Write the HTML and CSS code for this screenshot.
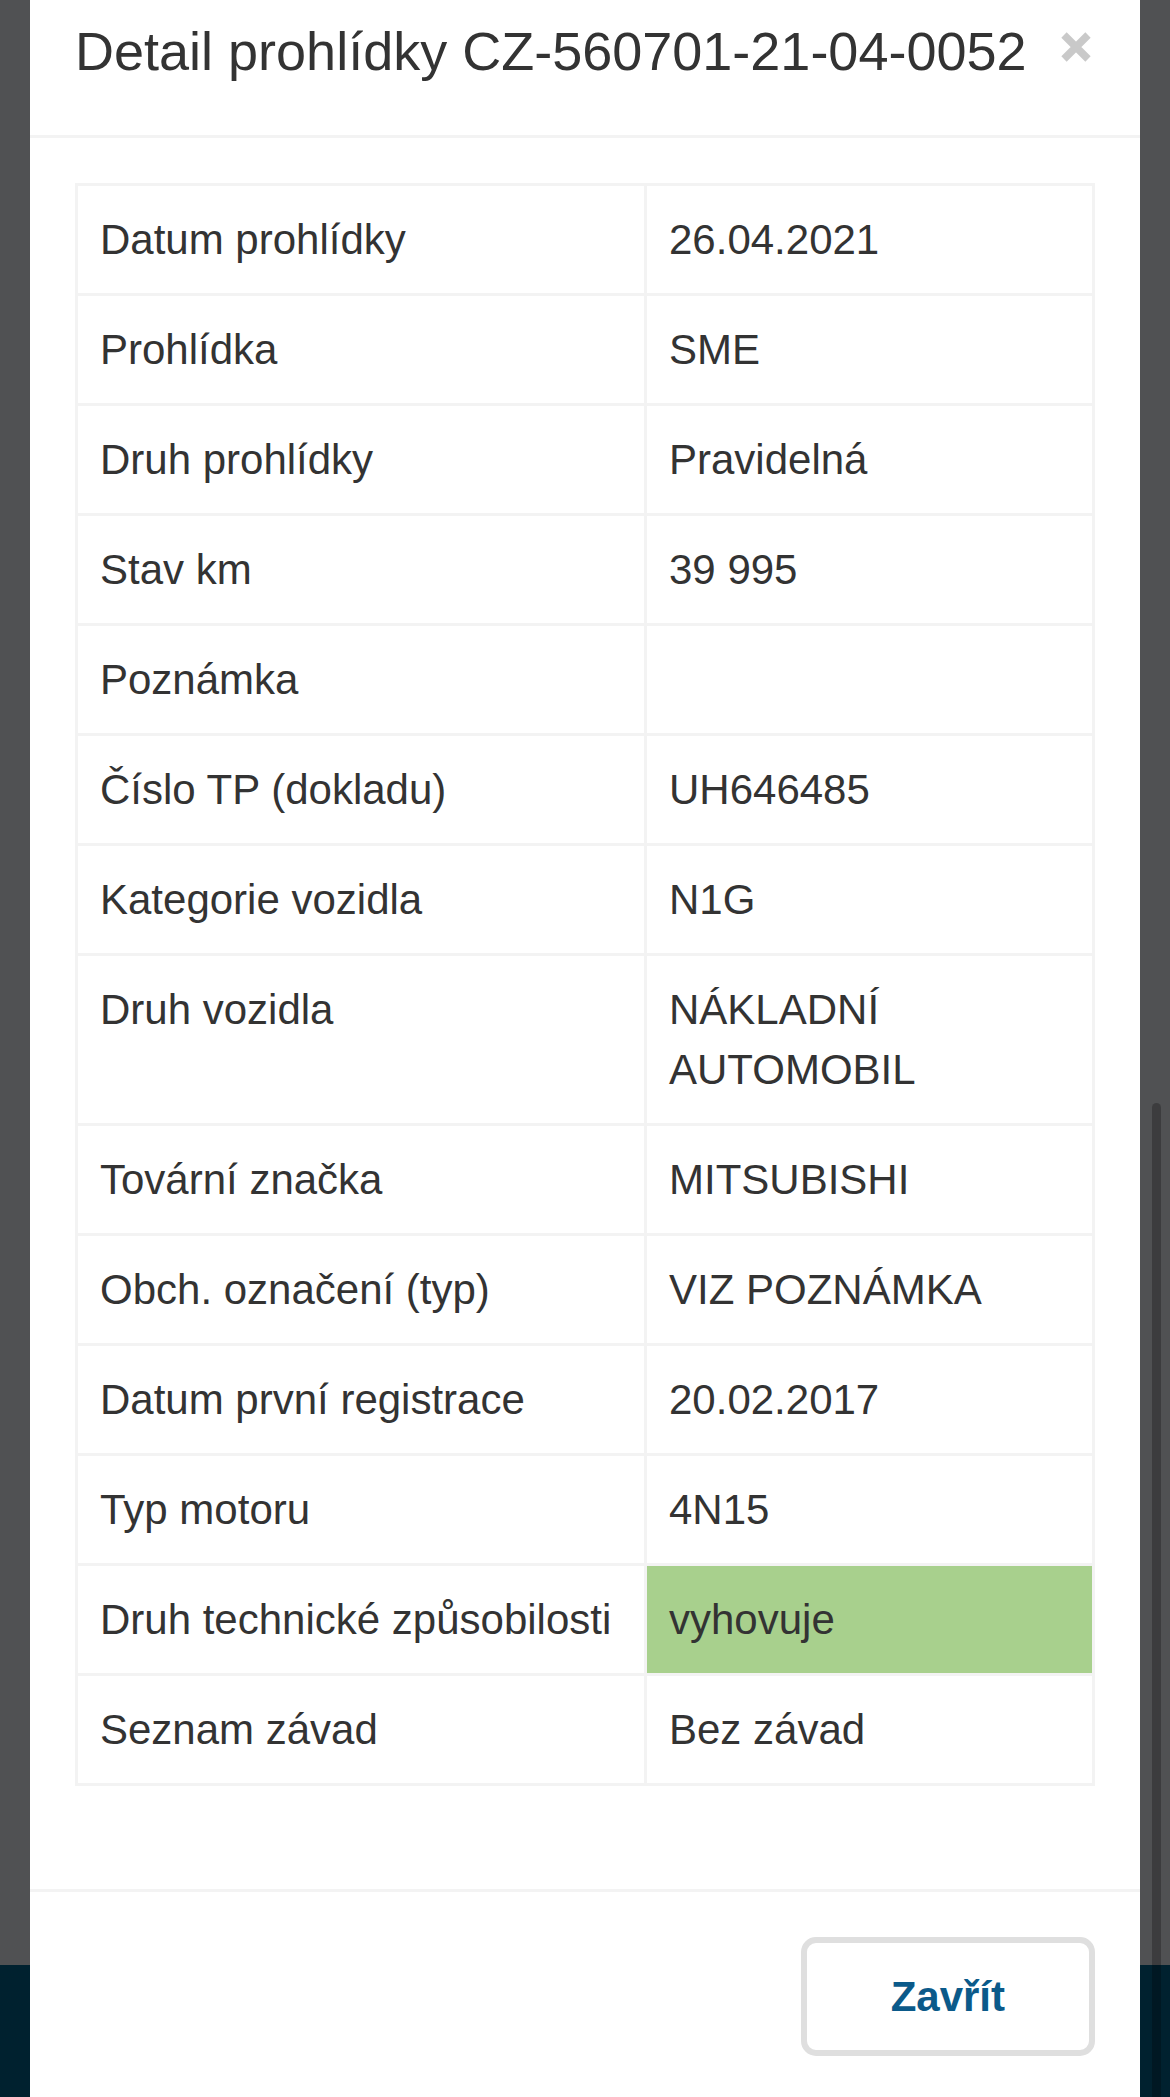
FILE: index.html
```html
<!DOCTYPE html>
<html lang="cs">
<head>
<meta charset="UTF-8">
<meta name="viewport" content="width=device-width, initial-scale=1.0">
<title>Detail prohlídky</title>
<link rel="stylesheet" href="styles.css">
</head>
<body>

<div class="page">
  <div class="page-main"></div>
  <div class="page-footer"></div>
</div>

<div class="scrollbar"></div>

<div class="modal">
  <div class="modal-header">
    <h4 class="modal-title">Detail prohlídky CZ-560701-21-04-0052</h4>
    <button class="close" type="button" aria-label="Zavřít">
      <svg width="30" height="30" viewBox="0 0 30 30">
        <path d="M3 3 L27 27 M27 3 L3 27" stroke="#c9c9c9" stroke-width="7.5" fill="none"/>
      </svg>
    </button>
  </div>

  <div class="modal-body">
    <table class="detail">
      <tr><td class="label">Datum prohlídky</td><td>26.04.2021</td></tr>
      <tr><td class="label">Prohlídka</td><td>SME</td></tr>
      <tr><td class="label">Druh prohlídky</td><td>Pravidelná</td></tr>
      <tr><td class="label">Stav km</td><td>39 995</td></tr>
      <tr><td class="label">Poznámka</td><td></td></tr>
      <tr><td class="label">Číslo TP (dokladu)</td><td>UH646485</td></tr>
      <tr><td class="label">Kategorie vozidla</td><td>N1G</td></tr>
      <tr><td class="label">Druh vozidla</td><td>NÁKLADNÍ AUTOMOBIL</td></tr>
      <tr><td class="label">Tovární značka</td><td>MITSUBISHI</td></tr>
      <tr><td class="label">Obch. označení (typ)</td><td>VIZ POZNÁMKA</td></tr>
      <tr><td class="label">Datum první registrace</td><td>20.02.2017</td></tr>
      <tr><td class="label">Typ motoru</td><td>4N15</td></tr>
      <tr><td class="label">Druh technické způsobilosti</td><td class="success">vyhovuje</td></tr>
      <tr><td class="label">Seznam závad</td><td>Bez závad</td></tr>
    </table>
  </div>

  <div class="modal-footer">
    <button class="btn" type="button">Zavřít</button>
  </div>
</div>

</body>
</html>
```

FILE: styles.css
```css
body {
  margin: 0;
  font-family: "Liberation Sans", Arial, sans-serif;
  color: #333;
  overflow: hidden;
  height: 2097px;
  position: relative;
}

/* dimmed page under the modal */
.page-main {
  height: 1965px;
  background: #505153;
}

.page-footer {
  height: 132px;
  background: #00212f;
}

.scrollbar {
  position: absolute;
  top: 1103px;
  right: 9px;
  width: 9px;
  bottom: -10px;
  border-radius: 5px;
  background: rgba(0, 0, 0, 0.25);
}

.modal {
  position: absolute;
  top: 0;
  left: 30px;
  right: 30px;
  bottom: 0;
  overflow: hidden;
  background: #fff;
}

.modal-header {
  display: flex;
  justify-content: space-between;
  align-items: flex-start;
  padding: 13px 45px 45px 45px;
  border-bottom: 3px solid #f3f3f3;
}

.modal-title {
  margin: 0;
  font-size: 54px;
  font-weight: normal;
  line-height: 77px;
}

.close {
  margin: 19px 4px 0 0;
  padding: 0;
  border: none;
  background: none;
  line-height: 0;
}

.modal-body {
  padding: 45px;
}

.detail {
  width: 100%;
  border-collapse: collapse;
  margin-bottom: 58px;
  font-size: 42px;
  line-height: 60px;
}

.detail td {
  border: 3px solid #f3f3f3;
  padding: 24px 24px 23px 22px;
  vertical-align: top;
}

.detail td.label {
  width: 520px;
  white-space: nowrap;
}

.detail td.success {
  background: #a8d08d;
}

.modal-footer {
  padding: 45px;
  border-top: 3px solid #f3f3f3;
  text-align: right;
}

.btn {
  font-family: "Liberation Sans", Arial, sans-serif;
  font-size: 42px;
  font-weight: bold;
  line-height: 59px;
  color: #0b5a8a;
  background: #fff;
  border: 6px solid #dfdfdf;
  border-radius: 15px;
  padding: 24px 84px;
}
```
